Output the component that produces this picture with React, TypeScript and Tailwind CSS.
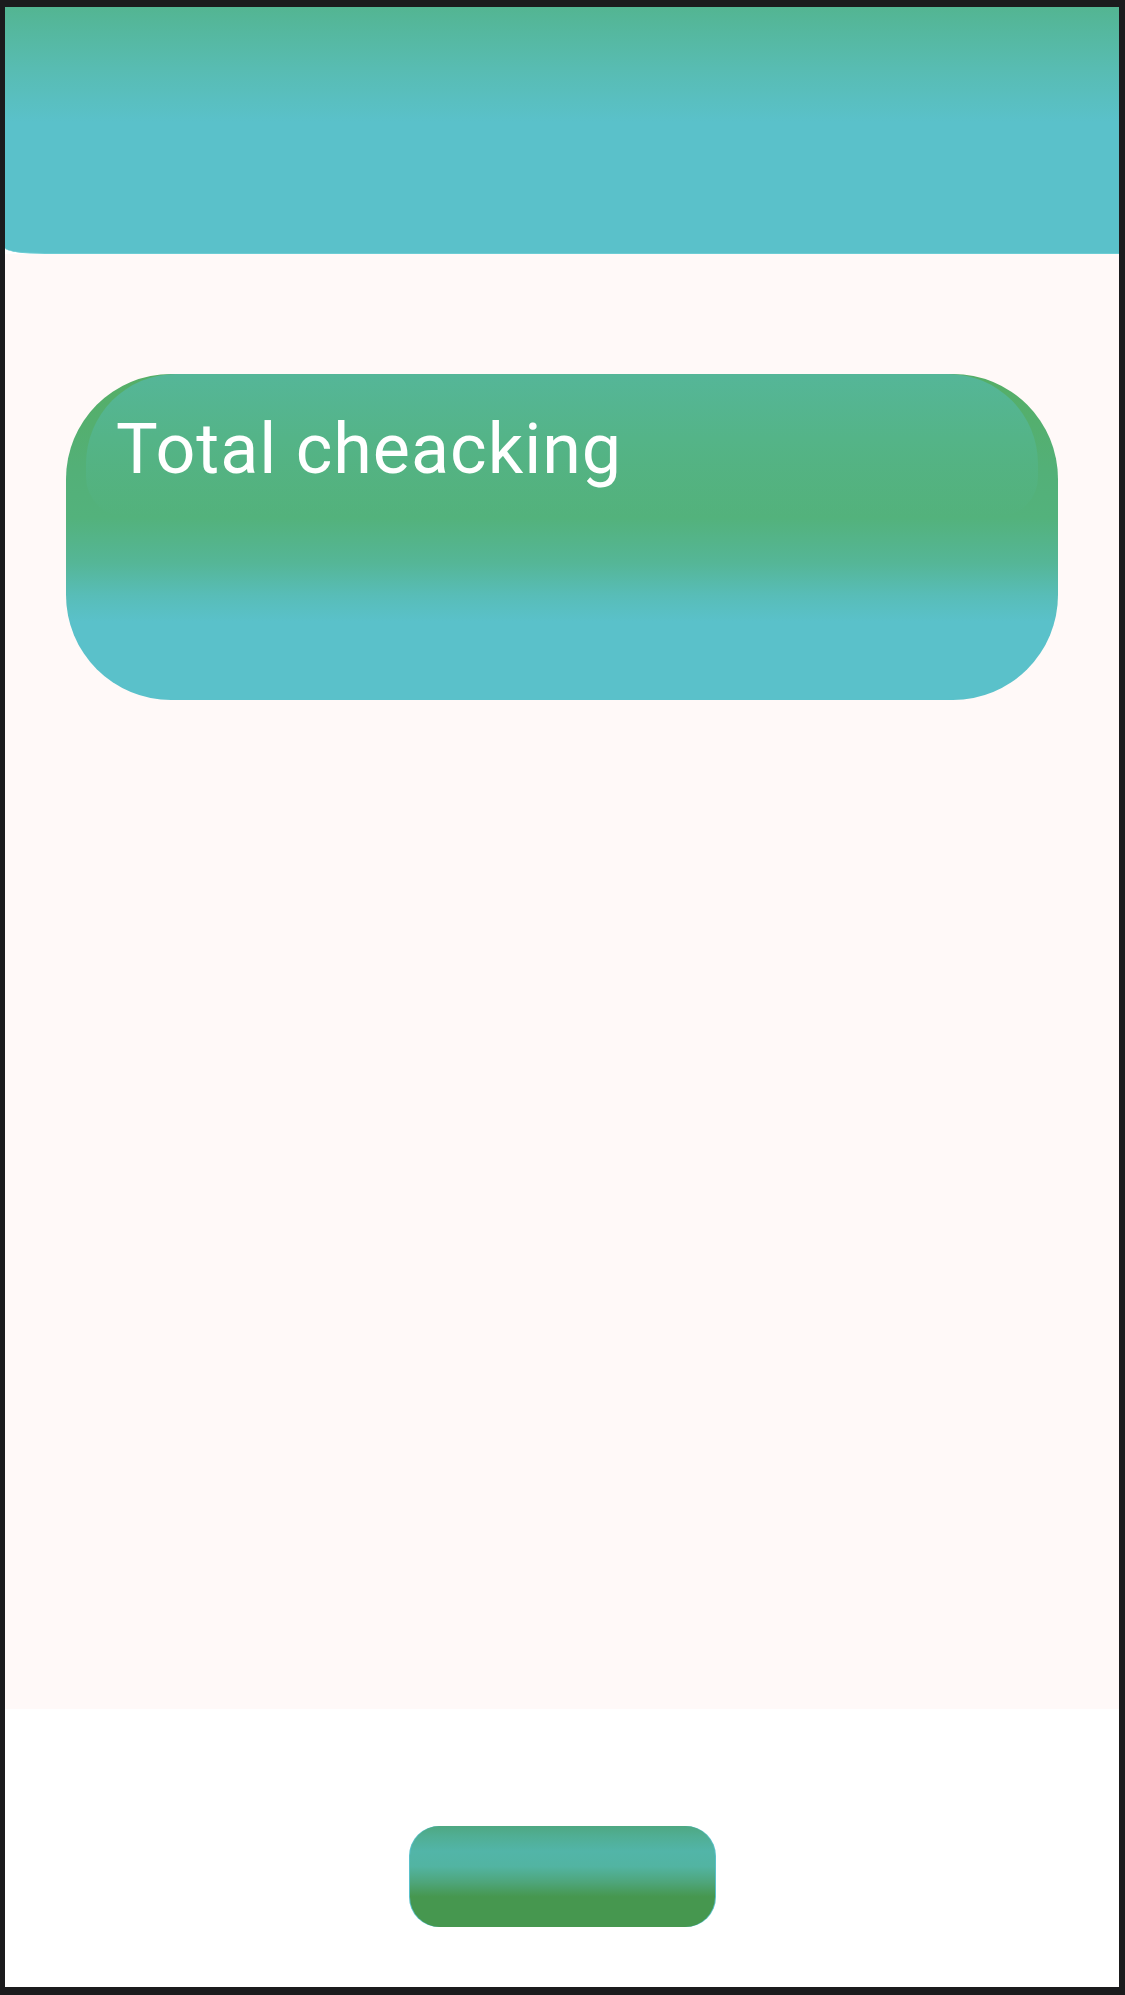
import React from "react";

export default function App() {
  return (
    <div
      className="w-[1125px] h-[1995px] bg-[#1b1b1d] pt-[7px] pl-[5px] pr-[6px] pb-[8px]"
      style={{ fontFamily: "Roboto, 'Noto Sans', sans-serif" }}
    >
      <div className="flex h-full w-full flex-col bg-white">
        {/* Header */}
        <div className="h-[247px] w-full shrink-0 rounded-bl-[40px_6px] border-b border-[#6ccdd4] bg-[linear-gradient(to_bottom,#53b592_0%,#58bcb2_25%,#5ac1ca_47%,#5ac1ca_100%)]" />

        {/* Pale body */}
        <div className="flex h-[1455px] w-full shrink-0 flex-col bg-[#fff9f8] px-[61px] pt-[120px]">
          <div className="relative h-[326px] w-full overflow-hidden rounded-[105px] bg-[linear-gradient(to_bottom,#55ae66_0%,#53b078_30%,#53b27c_44%,#55b697_58%,#58bdb8_68%,#5ac1ca_76%,#5ac1ca_100%)]">
            <div className="absolute left-[20px] right-[20px] top-0 h-[143px] rounded-t-[90px] rounded-b-[40px] bg-[linear-gradient(to_bottom,#55b698_0%,#54b488_45%,rgba(83,178,124,0.4)_100%)]" />
            <div className="relative pl-[50px] pt-[34px] text-[70px] leading-[82px] font-normal tracking-[1px] text-white">
              Total cheacking
            </div>
          </div>
        </div>

        {/* White footer with button */}
        <div className="flex flex-1 w-full justify-center bg-white pt-[117px]">
          <div className="h-[101px] w-[307px] rounded-[30px] bg-[#5ac1ca] px-[1px]">
            <div className="h-full w-full rounded-[30px] bg-[linear-gradient(to_bottom,#4ea882_0%,#50ae94_10%,#52b5a8_25%,#52b4a2_40%,#4ea57a_56%,#46974f_70%,#46974f_100%)]" />
          </div>
        </div>
      </div>
    </div>
  );
}
